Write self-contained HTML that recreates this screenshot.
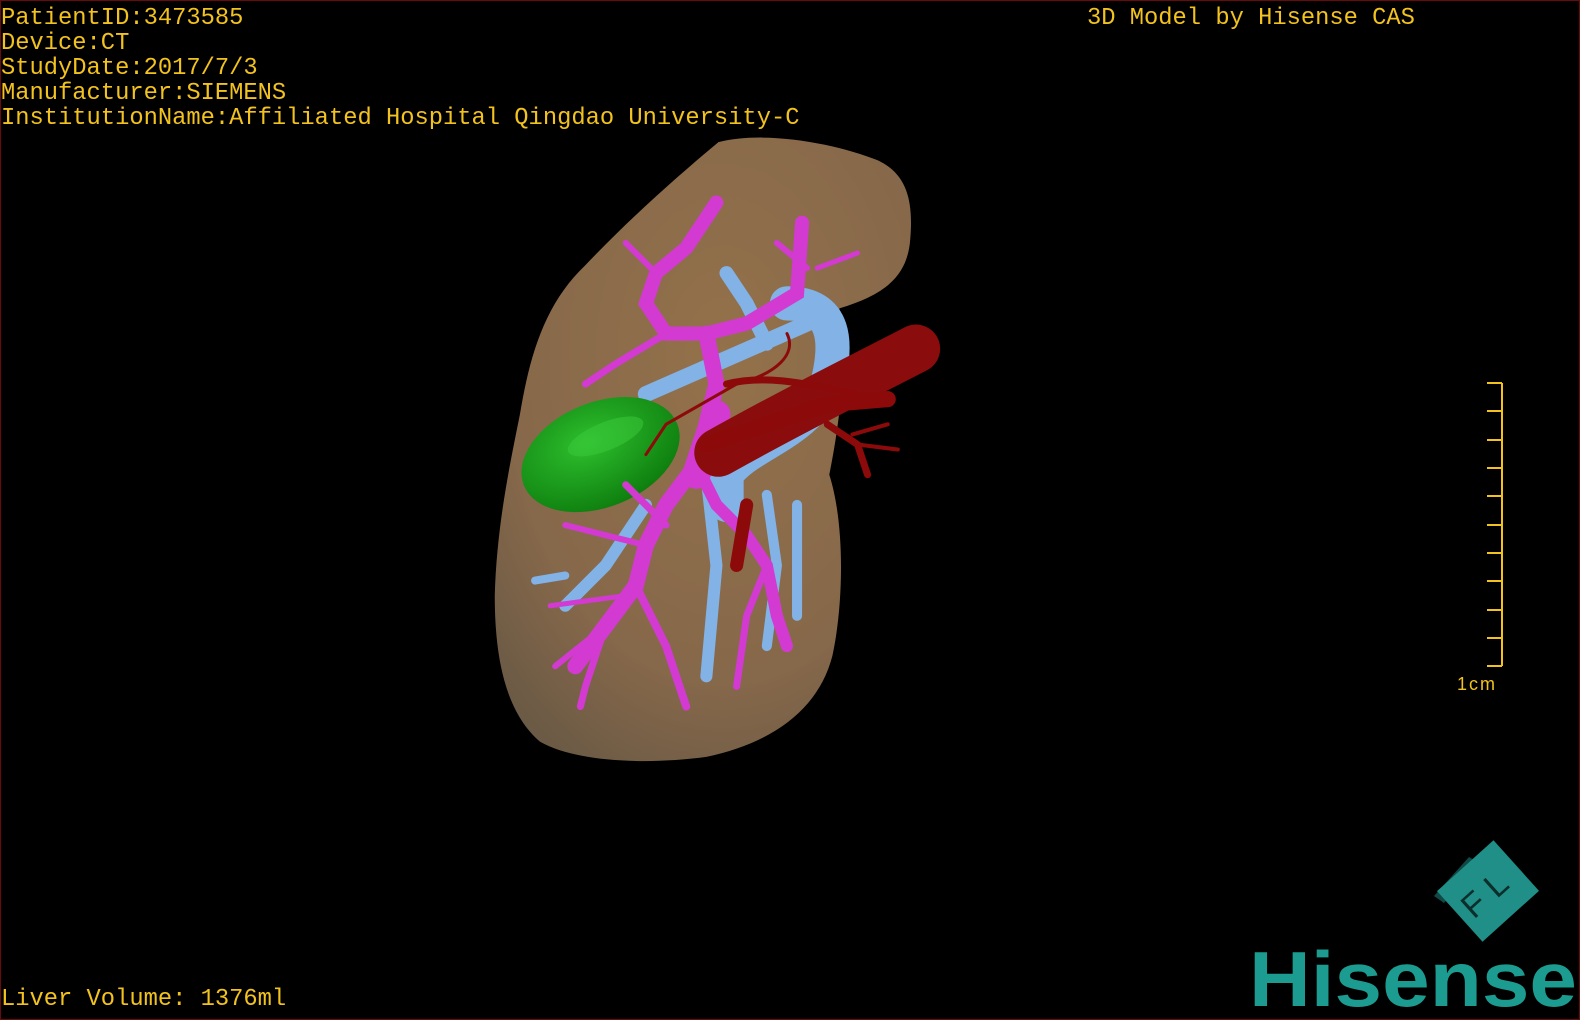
<!DOCTYPE html>
<html><head><meta charset="utf-8"><style>
html,body{margin:0;padding:0;background:#000;}
#w{position:relative;width:1580px;height:1020px;overflow:hidden;background:#000;box-sizing:border-box;border:1px solid #6a0a0a;}
.t{position:absolute;font-family:"Liberation Mono",monospace;font-size:24px;color:#f2c21e;white-space:pre;line-height:25px;transform:scaleX(0.99);transform-origin:0 0;}
svg{position:absolute;left:0;top:0;}
</style></head><body><div id="w">
<svg width="1580" height="1020" viewBox="0 0 1568 1012" preserveAspectRatio="none">
<defs>
<radialGradient id="lv" cx="0.55" cy="0.35" r="0.75"><stop offset="0" stop-color="#93714a"/><stop offset="0.7" stop-color="#86684a"/><stop offset="1" stop-color="#6b5a45"/></radialGradient>
<radialGradient id="gb" cx="0.45" cy="0.35" r="0.7"><stop offset="0" stop-color="#2ec02e"/><stop offset="1" stop-color="#0c7a0c"/></radialGradient>
</defs>
<path d="M712,140 C760,128 830,142 870,158 C900,172 906,200 902,240 C898,275 875,292 832,305 C840,360 832,420 822,470 C838,520 836,600 825,650 C812,700 770,735 700,750 C640,758 570,755 535,735 C500,705 490,650 490,590 C492,520 505,460 515,410 C525,350 540,300 580,262 C625,215 670,175 712,140 Z" fill="url(#lv)"/>
<g stroke="#82b2e6" stroke-linecap="round" fill="none">
<path d="M640,390 L800,320" stroke-width="16"/>
<path d="M720,270 L740,300 L760,340" stroke-width="14"/>
<path d="M780,300 C830,300 830,340 820,380 C800,430 740,440 720,470 L720,500" stroke-width="34"/>
<path d="M700,470 L710,560 L700,670" stroke-width="12"/>
<path d="M760,490 L770,560 L760,640" stroke-width="10"/>
<path d="M640,500 L600,560 L560,600" stroke-width="12"/>
<path d="M560,570 L530,575" stroke-width="8"/>
<path d="M790,500 L790,610" stroke-width="10"/>
</g>
<ellipse cx="595" cy="450" rx="82" ry="52" transform="rotate(-22 595 450)" fill="url(#gb)"/>
<g stroke="#d23ad2" stroke-linecap="round" fill="none">
<path d="M710,200 L680,245 L650,270 L640,300 L660,330 L700,330 L740,320 L790,290 L795,220" stroke-width="14"/>
<path d="M700,330 L710,380 L700,420 L690,460 L660,500 L640,540 L630,580 L600,620 L570,660" stroke-width="16"/>
<path d="M660,330 L610,360 L580,380" stroke-width="7"/>
<path d="M650,270 L620,240" stroke-width="6"/>
<path d="M690,460 L710,500 L740,530 L760,560 L770,610 L780,640" stroke-width="12"/>
<path d="M640,540 L600,530 L560,520" stroke-width="6"/>
<path d="M630,580 L660,640 L680,700" stroke-width="8"/>
<path d="M600,620 L580,680 L575,700" stroke-width="7"/>
<path d="M600,620 L550,660" stroke-width="6"/>
<path d="M760,560 L740,610 L730,680" stroke-width="7"/>
<path d="M620,590 L545,600" stroke-width="5"/>
<path d="M690,470 L710,410" stroke-width="28"/>
<path d="M770,240 L800,265" stroke-width="6"/>
<path d="M810,265 L850,250" stroke-width="5"/>
<path d="M660,520 L620,480" stroke-width="7"/>
</g>
<g stroke="#8c0a0a" stroke-linecap="round" fill="none">
<path d="M712,448 C780,410 840,380 908,345" stroke-width="48" stroke="#8a0c0c"/>
<path d="M700,440 L820,400 L880,395" stroke-width="16"/>
<path d="M740,500 L730,560" stroke-width="13"/>
<path d="M720,380 C760,370 800,380 850,390" stroke-width="7"/>
<path d="M780,330 C790,350 770,370 730,380 L660,420 L640,450" stroke-width="3"/>
<path d="M820,420 L850,440 L860,470" stroke-width="7"/>
<path d="M850,440 L890,445" stroke-width="4"/>
<path d="M845,430 L880,420" stroke-width="4"/>
</g>
<ellipse cx="600" cy="432" rx="40" ry="14" transform="rotate(-22 600 432)" fill="#3ccc3c" opacity="0.5"/>
</svg>
<svg width="1580" height="1020">
<g stroke="#f2c21e" stroke-width="2">
<line x1="1501" y1="382" x2="1501" y2="665"/>
<line x1="1486" y1="382" x2="1501" y2="382"/><line x1="1486" y1="410" x2="1501" y2="410"/><line x1="1486" y1="439" x2="1501" y2="439"/><line x1="1486" y1="467" x2="1501" y2="467"/><line x1="1486" y1="495" x2="1501" y2="495"/><line x1="1486" y1="524" x2="1501" y2="524"/><line x1="1486" y1="552" x2="1501" y2="552"/><line x1="1486" y1="580" x2="1501" y2="580"/><line x1="1486" y1="609" x2="1501" y2="609"/><line x1="1486" y1="637" x2="1501" y2="637"/><line x1="1486" y1="665" x2="1501" y2="665"/>
</g>
<text x="1456" y="689" font-family="Liberation Sans,sans-serif" font-size="18" fill="#f2c21e" letter-spacing="2">1cm</text>
<polygon points="1433,895 1468,856 1478,862 1443,902" fill="#0f4a46"/>
<g transform="translate(1487 890) rotate(-42)">
<rect x="-38" y="-34" width="76" height="68" fill="#1f8f88"/>
<text x="0" y="12" text-anchor="middle" font-family="Liberation Sans,sans-serif" font-size="34" fill="#0c2f2c" letter-spacing="10">FL</text>
</g>
<text x="1248" y="1005" font-family="Liberation Sans,sans-serif" font-weight="bold" font-size="78" fill="#1c9c90" textLength="328" lengthAdjust="spacingAndGlyphs">Hisense</text>
</svg>
<div class="t" style="left:0;top:5px">PatientID:3473585
Device:CT
StudyDate:2017/7/3
Manufacturer:SIEMENS
InstitutionName:Affiliated Hospital Qingdao University-C</div>
<div class="t" style="left:1086px;top:5px">3D Model by Hisense CAS</div>
<div class="t" style="left:0;top:986px">Liver Volume: 1376ml</div>
</div></body></html>
